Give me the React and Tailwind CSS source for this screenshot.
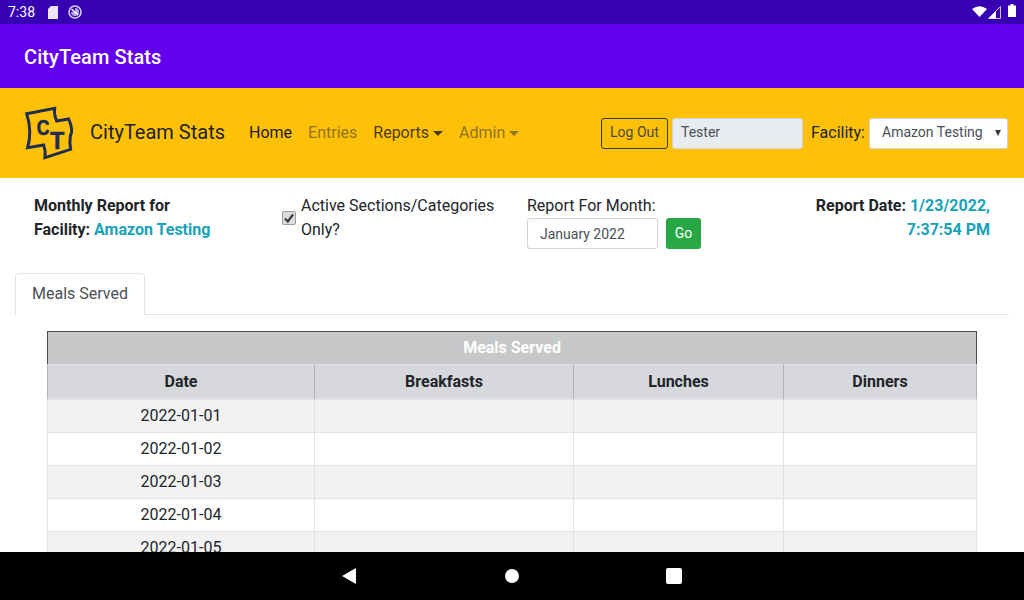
import React from "react";

function Logo() {
  return (
    <svg width="60" height="60" viewBox="0 0 180 180" className="block mb-[2px]">
      <path
        d="M20 35 L104 19 Q101 36 110 57 L146 51 Q161 84 151 102 Q148 122 152 142 L75 167 Q78 148 71 129 L23 137 Q37 88 20 35 Z"
        fill="none"
        stroke="#1f2d50"
        strokeWidth="9"
        strokeLinejoin="miter"
      />
      <text x="50" y="99" textLength="38" lengthAdjust="spacingAndGlyphs" stroke="#1f2d50" strokeWidth="2" fontFamily="'Liberation Sans', sans-serif" fontWeight="700" fontSize="66" fill="#1f2d50">C</text>
      <text x="91" y="141" textLength="42" lengthAdjust="spacingAndGlyphs" stroke="#1f2d50" strokeWidth="2" fontFamily="'Liberation Sans', sans-serif" fontWeight="700" fontSize="72" fill="#1f2d50">T</text>
    </svg>
  );
}

function StatusBar() {
  return (
    <div className="h-6 shrink-0 bg-[#3700b3] flex items-center pl-2 pr-2 text-white">
      <span className="text-[14px] leading-none w-[40px]">7:38</span>
      <svg width="10" height="13" viewBox="0 0 10 13">
        <path d="M3 0 H10 V13 H0 V3 Z" fill="#ece6f8" />
      </svg>
      <svg width="14" height="14" viewBox="0 0 14 14" className="ml-[10px]">
        <circle cx="7" cy="7" r="6" fill="none" stroke="#d8ccf0" strokeWidth="1.6" />
        <path d="M7 3 A4 4 0 1 1 3 7 L7 7 Z" fill="#b7a3e6" />
        <path d="M3.5 4 L10 10" stroke="#ffffff" strokeWidth="1.6" />
      </svg>
      <div className="ml-auto flex items-center">
        <svg width="15" height="11" viewBox="0 0 15 11" className="mb-[2px]">
          <path d="M0 3 Q7.5 -2.5 15 3 L7.5 11 Z" fill="#fff" />
        </svg>
        <svg width="13" height="13" viewBox="0 0 13 13" className="ml-[1px]">
          <path d="M12.5 0.5 V12.5 H0.5 Z" fill="#3700b3" stroke="#cfc3ec" strokeWidth="1" />
          <path d="M8 5 V12.5 H0.5 Z" fill="#fff" />
        </svg>
        <svg width="8" height="13" viewBox="0 0 8 13" className="ml-[7px] mb-[3px]">
          <path d="M2.5 0 H5.5 V1.5 H8 V13 H0 V1.5 H2.5 Z" fill="#fff" />
        </svg>
      </div>
    </div>
  );
}

function NavBar() {
  return (
    <div className="h-[90px] shrink-0 bg-[#ffc107] flex items-center pl-5 pr-4 text-[16px]">
      <Logo />
      <span className="ml-[10px] mb-[2px] text-[20px] text-[#212121]">CityTeam Stats</span>
      <nav className="ml-6 flex items-center gap-4">
        <span className="text-[#1f1a08]">Home</span>
        <span className="text-[#8f7420]">Entries</span>
        <span className="text-[#4a3c0c] flex items-center">
          Reports
          <span className="ml-[4px] w-0 h-0 border-x-[5px] border-x-transparent border-t-[5px] border-t-[#4a3c0c]" />
        </span>
        <span className="text-[#8f7420] flex items-center">
          Admin
          <span className="ml-[4px] w-0 h-0 border-x-[5px] border-x-transparent border-t-[5px] border-t-[#8f7420]" />
        </span>
      </nav>
      <div className="ml-auto flex items-center">
        <button className="h-[31px] w-[67px] pb-[2px] rounded-[3px] border border-[#343a40] text-[14px] text-[#4a4a3c] flex items-center justify-center">
          Log Out
        </button>
        <div className="ml-1 h-[31px] w-[131px] pb-[2px] rounded-[3px] border border-[#ced4da] bg-[#e9ecef] text-[14px] text-[#495057] flex items-center pl-2">
          Tester
        </div>
        <span className="ml-2 text-[#212529]">Facility:</span>
        <div className="relative ml-1 h-[31px] w-[139px] pb-[2px] rounded-[3px] border border-[#ced4da] bg-white text-[14px] text-[#495057] flex items-center pl-3">
          Amazon Testing
          <span className="absolute right-[6px] top-[11px] w-0 h-0 border-x-[3.5px] border-x-transparent border-t-[6px] border-t-[#343a40]" />
        </div>
      </div>
    </div>
  );
}

function ReportHeader() {
  return (
    <div className="h-[95px] flex text-[16px] leading-6 text-[#212529]">
      <div className="ml-[34px] mt-4 w-[248px] font-bold">
        Monthly Report for
        <br />
        Facility: <span className="text-[#17a2b8]">Amazon Testing</span>
      </div>
      <div className="mt-4 w-[245px] flex items-center h-12">
        <span className="relative w-[14px] h-[14px] shrink-0">
          <input
            type="checkbox"
            defaultChecked
            readOnly
            className="appearance-none block w-[14px] h-[14px] m-0 rounded-[2px] border border-[#9d9d9d] bg-[#dcdcdc]"
          />
          <svg width="14" height="14" viewBox="0 0 14 14" className="absolute left-0 top-0">
            <path d="M3 7.5 L5.8 10.5 L11 3.5" fill="none" stroke="#3a3a3a" strokeWidth="2.2" />
          </svg>
        </span>
        <span className="ml-[5px]">
          Active Sections/Categories
          <br />
          Only?
        </span>
      </div>
      <div className="mt-4">
        <div>Report For Month:</div>
        <div className="flex items-center">
          <div className="h-[31px] w-[131px] rounded-[3px] border border-[#ced4da] bg-white text-[14px] text-[#495057] flex items-center pl-3">
            January 2022
          </div>
          <button className="ml-2 h-[31px] w-[35px] pb-[2px] rounded-[3px] bg-[#28a745] text-white text-[14px] flex items-center justify-center">
            Go
          </button>
        </div>
      </div>
      <div className="ml-auto mr-[34px] mt-4 text-right font-bold">
        Report Date: <span className="text-[#17a2b8]">1/23/2022,</span>
        <br />
        <span className="text-[#17a2b8]">7:37:54 PM</span>
      </div>
    </div>
  );
}

function Tabs() {
  return (
    <div className="mx-[15px] h-[42px] border-b border-[#dee2e6] flex">
      <div className="h-[42px] w-[130px] rounded-t-[4px] border border-[#dee2e6] border-b-white bg-white text-[16px] text-[#495057] flex items-center justify-center">
        Meals Served
      </div>
    </div>
  );
}

function MealsTable() {
  const dates = ["2022-01-01", "2022-01-02", "2022-01-03", "2022-01-04", "2022-01-05"];
  const cell = "border-l last:border-r border-b border-[#dee2e6] p-0 pb-[1px] text-center";
  const head =
    "border-l last:border-r border-[#b1b3b7] border-t border-t-[#dee2e6] border-b-2 border-b-[#dee2e6] bg-[#d6d8db] h-[36px] p-0 font-bold text-center";
  return (
    <table className="ml-[47px] mt-4 w-[930px] table-fixed border-separate border-spacing-0 text-[16px] text-[#212529]">
      <colgroup>
        <col className="w-[267px]" />
        <col className="w-[259px]" />
        <col className="w-[210px]" />
        <col className="w-[194px]" />
      </colgroup>
      <thead>
        <tr>
          <th
            colSpan={4}
            className="h-[33px] p-0 bg-[#c6c8ca] border-x border-t border-x-[#454d55] border-t-[#454d55] text-white font-bold text-center"
          >
            Meals Served
          </th>
        </tr>
        <tr>
          <th className={head}>Date</th>
          <th className={head}>Breakfasts</th>
          <th className={head}>Lunches</th>
          <th className={head}>Dinners</th>
        </tr>
      </thead>
      <tbody>
        {dates.map((d, i) => (
          <tr key={d} className={i % 2 === 0 ? "h-[33px] bg-[#f2f2f2]" : "h-[33px] bg-white"}>
            <td className={cell}>{d}</td>
            <td className={cell}></td>
            <td className={cell}></td>
            <td className={cell}></td>
          </tr>
        ))}
      </tbody>
    </table>
  );
}

function BottomNav() {
  return (
    <div className="h-12 shrink-0 bg-black flex items-center justify-center">
      <svg width="14" height="16" viewBox="0 0 14 16">
        <path d="M0 8 L14 0 V16 Z" fill="#fff" />
      </svg>
      <div className="ml-[149px] w-[14px] h-[14px] rounded-full bg-white" />
      <div className="ml-[147px] w-4 h-4 rounded-[2px] bg-white" />
    </div>
  );
}

export default function App() {
  return (
    <div className="w-[1024px] h-[600px] flex flex-col overflow-hidden bg-white font-['Roboto',sans-serif]">
      <StatusBar />
      <div className="h-16 shrink-0 bg-[#6200ee] flex items-center pl-6 pt-[2px] text-white text-[20px] font-medium tracking-[0.08px]">
        CityTeam Stats
      </div>
      <NavBar />
      <div className="flex-1 min-h-0 overflow-hidden">
        <ReportHeader />
        <Tabs />
        <MealsTable />
      </div>
      <BottomNav />
    </div>
  );
}
